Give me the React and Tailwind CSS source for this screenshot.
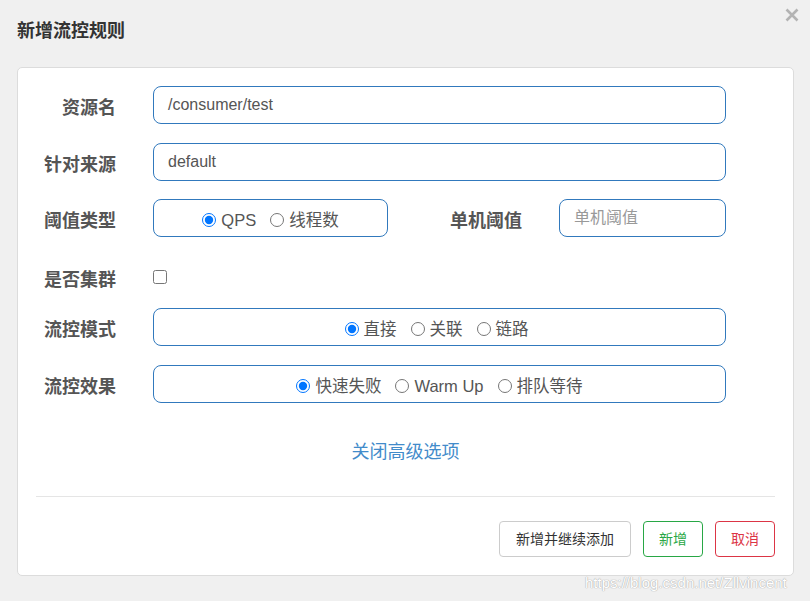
import React from "react";

const font = { fontFamily: '"Liberation Sans", "Noto Sans CJK SC", sans-serif' };

function Label({ children, w = "w-[98px]" }) {
  return (
    <div className={`${w} shrink-0 text-right text-[18px] font-bold text-[#555] translate-y-[3px]`}>
      {children}
    </div>
  );
}

function Radio({ label, checked, name }) {
  return (
    <label className="flex items-center gap-[5px] text-[16.5px] text-[#555] translate-y-[2px]">
      <input type="radio" name={name} defaultChecked={checked} className="m-0 w-[14px] h-[14px]" />
      <span>{label}</span>
    </label>
  );
}

export default function App() {
  return (
    <div className="relative min-h-[601px] w-[810px] bg-[#f0f0f0]" style={font}>
      <div className="h-[67px] pl-[17px] pt-[18px]">
        <div className="text-[18px] font-bold text-[#333] leading-[26px]">新增流控规则</div>
      </div>
      <svg className="absolute left-[785px] top-[8px]" width="14" height="14" viewBox="0 0 14 14">
        <path d="M1.5 1.5 L12.5 12.5 M12.5 1.5 L1.5 12.5" stroke="#b3b3b3" strokeWidth="2.6" strokeLinecap="butt" />
      </svg>

      <div className="ml-[17px] w-[777px] h-[509px] bg-white border border-[#dcdcdc] rounded-[5px] pt-[18px]">
        <div className="flex items-center h-[38px]">
          <Label>资源名</Label>
          <div className="ml-[37px] w-[573px] h-[38px] border border-[#3179bd] rounded-[8px] flex items-center pl-[14px] text-[16px] text-[#555]">
            /consumer/test
          </div>
        </div>
        <div className="flex items-center h-[38px] mt-[19px]">
          <Label>针对来源</Label>
          <div className="ml-[37px] w-[573px] h-[38px] border border-[#3179bd] rounded-[8px] flex items-center pl-[14px] text-[16px] text-[#555]">
            default
          </div>
        </div>
        <div className="flex items-center h-[38px] mt-[18px]">
          <Label>阈值类型</Label>
          <div className="ml-[37px] w-[235px] h-[38px] border border-[#3179bd] rounded-[8px] flex items-center justify-center gap-[14px]">
            <Radio name="grade" label="QPS" checked />
            <Radio name="grade" label="线程数" />
          </div>
          <Label w="w-[134px]">单机阈值</Label>
          <div className="ml-[37px] w-[167px] h-[38px] border border-[#3179bd] rounded-[8px] flex items-center pl-[14px] text-[16px] text-[#999]">
            单机阈值
          </div>
        </div>
        <div className="flex items-center h-[38px] mt-[21px]">
          <Label>是否集群</Label>
          <input type="checkbox" className="ml-[37px] m-0 w-[14px] h-[14px]" />
        </div>
        <div className="flex items-center h-[38px] mt-[12px]">
          <Label>流控模式</Label>
          <div className="ml-[37px] w-[573px] h-[38px] border border-[#3179bd] rounded-[8px] flex items-center justify-center gap-[14px] pr-[6px]">
            <Radio name="strategy" label="直接" checked />
            <Radio name="strategy" label="关联" />
            <Radio name="strategy" label="链路" />
          </div>
        </div>
        <div className="flex items-center h-[38px] mt-[19px]">
          <Label>流控效果</Label>
          <div className="ml-[37px] w-[573px] h-[38px] border border-[#3179bd] rounded-[8px] flex items-center justify-center gap-[14px]">
            <Radio name="behavior" label="快速失败" checked />
            <Radio name="behavior" label="Warm Up" />
            <Radio name="behavior" label="排队等待" />
          </div>
        </div>
        <div className="mt-[37px] h-[24px] flex items-center justify-center text-[18px] text-[#428bca] leading-[24px]">
          关闭高级选项
        </div>
        <div className="mx-[18px] mt-[32px] h-px bg-[#e5e5e5]" />
        <div className="flex justify-end gap-[12px] mr-[18px] mt-[24px]">
          <button className="h-[36px] w-[132px] border border-[#cccccc] rounded-[4px] text-[14px] text-[#333] bg-white">
            新增并继续添加
          </button>
          <button className="h-[36px] w-[60px] border border-[#28a745] rounded-[4px] text-[14px] text-[#28a745] bg-white">
            新增
          </button>
          <button className="h-[36px] w-[60px] border border-[#dc3545] rounded-[4px] text-[14px] text-[#dc3545] bg-white">
            取消
          </button>
        </div>
      </div>

      <div
        className="absolute left-[585px] top-[574px] text-[15px] text-white leading-[18px]"
        style={{ textShadow: "0 0 1px #a8a8a8, 0 0 1px #a8a8a8" }}
      >
        https://blog.csdn.net/Zllvincent
      </div>
    </div>
  );
}
